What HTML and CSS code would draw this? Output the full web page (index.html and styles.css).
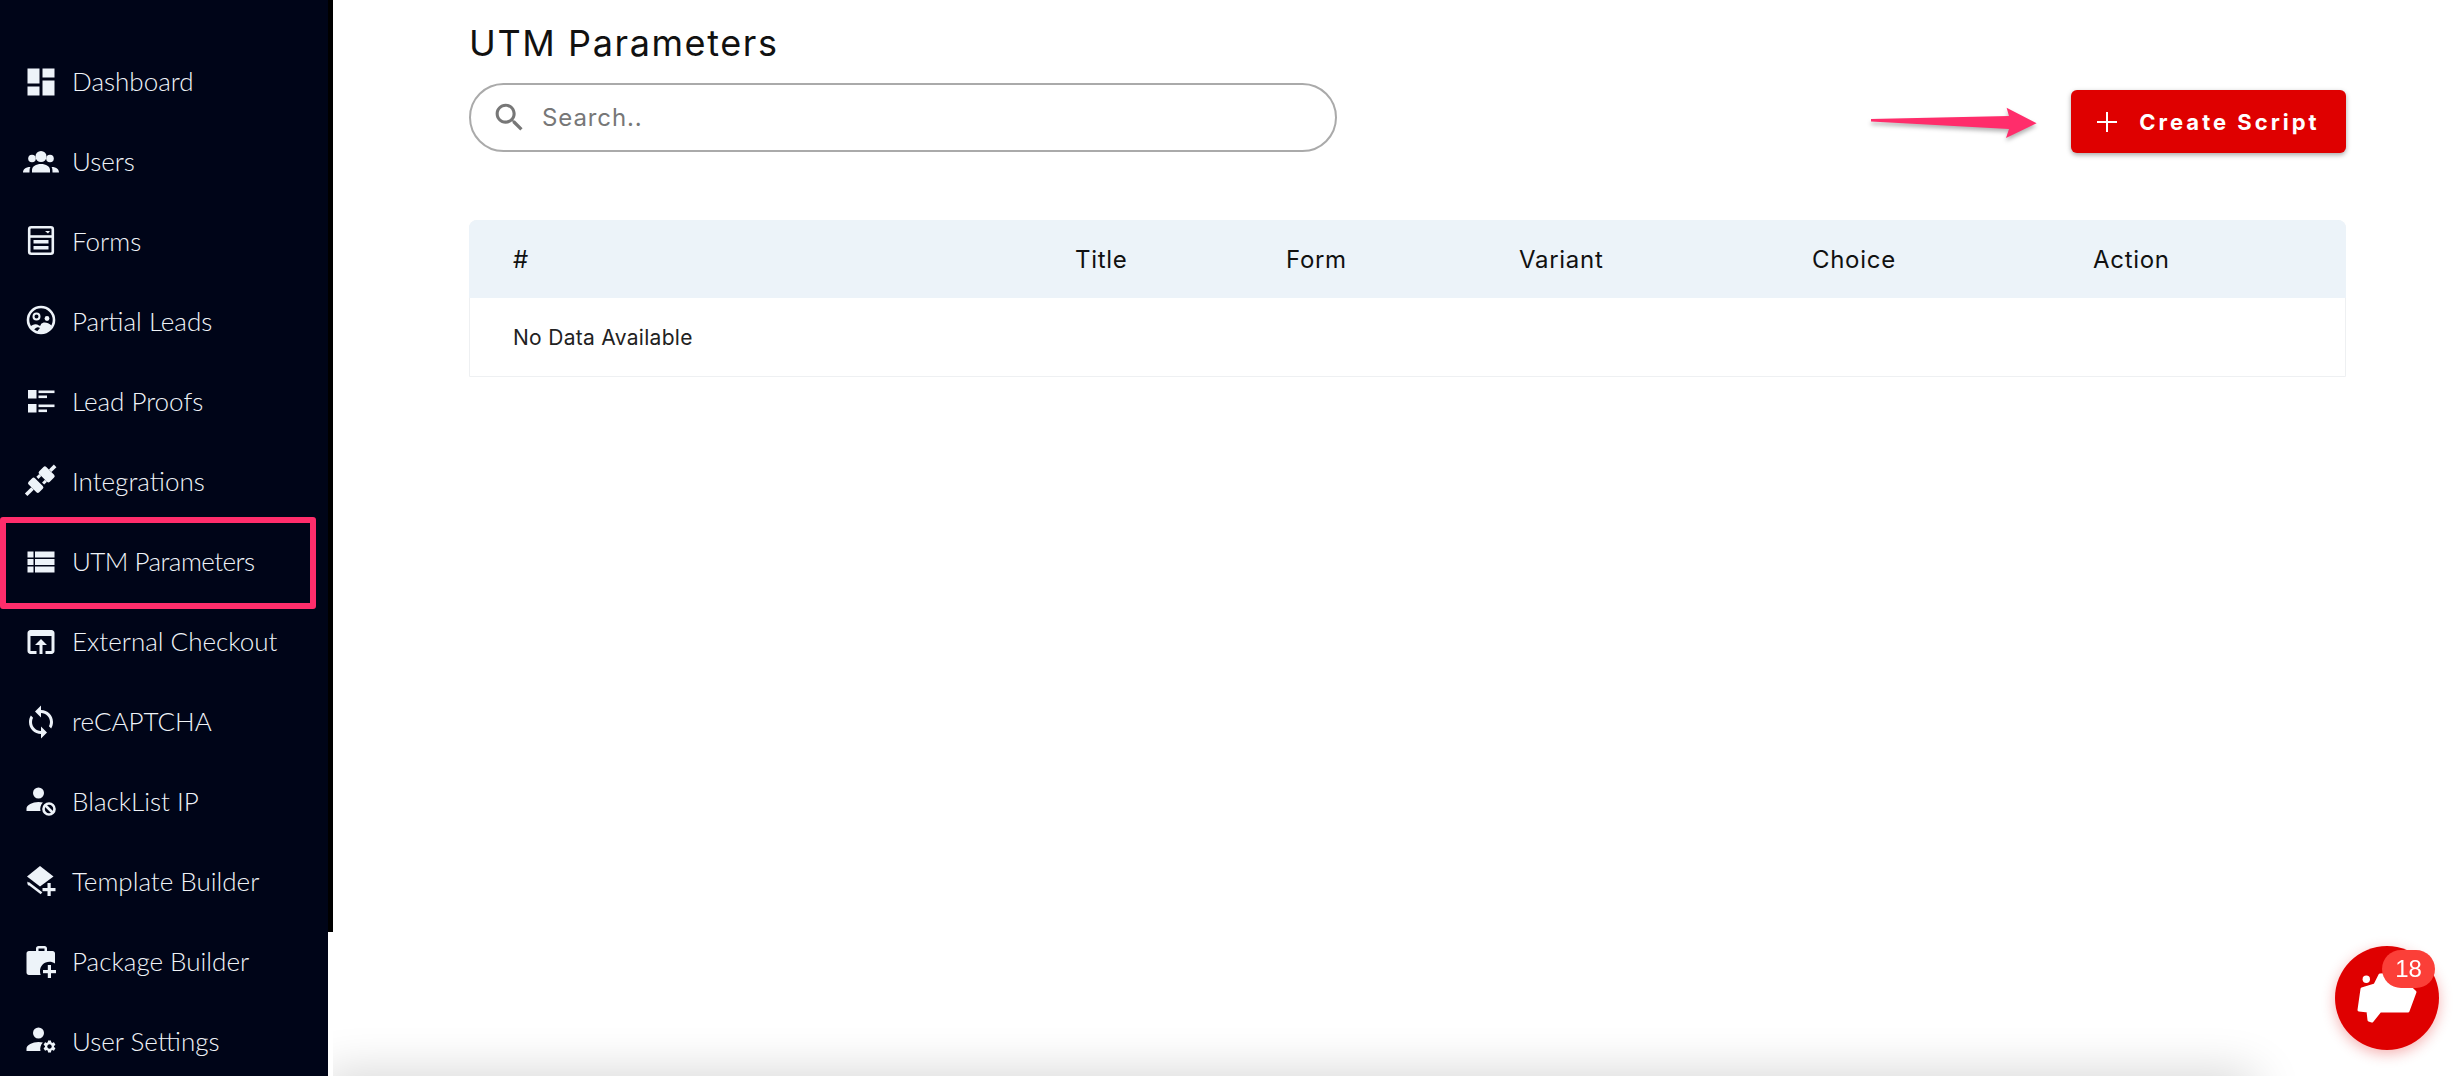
FILE: index.html
```html
<!DOCTYPE html>
<html lang="en">
<head>
<meta charset="utf-8">
<title>UTM Parameters</title>
<link rel="stylesheet" href="styles.css">
</head>
<body>
<div class="app">
  <nav class="sidebar">
    <a class="nav-item"><svg class="nav-icon" viewBox="0 0 24 24"><path d="M3 13h8V3H3v10zm0 8h8v-6H3v6zm10 0h8V11h-8v10zm0-18v6h8V3h-8z"/></svg><span>Dashboard</span></a>
    <a class="nav-item"><svg class="nav-icon" viewBox="0 0 36 36"><circle cx="18" cy="12.500" r="5.500"/><circle cx="9" cy="14.500" r="3.800"/><circle cx="27" cy="14.500" r="3.800"/><path d="M9 28.500V26c0-3.500 4-6 9-6s9 2.500 9 6v2.500z"/><path d="M0 28.500c0-3 2-5.500 7.500-5.500-.8 1-1 2.500-1 5.500z"/><path d="M36 28.500c0-3-2-5.500-7.500-5.500.8 1 1 2.500 1 5.500z"/></svg><span>Users</span></a>
    <a class="nav-item"><svg class="nav-icon" viewBox="0 0 36 36"><rect x="6.200" y="3.200" width="23.600" height="26.600" rx="2" class="line"/><path d="M6 12.500h24" class="line"/><path d="M22 7h5l-2 2.500z"/><rect x="10.500" y="16" width="15" height="3.500"/><rect x="10.500" y="22" width="15" height="3.500"/></svg><span>Forms</span></a>
    <a class="nav-item"><svg class="nav-icon" viewBox="0 0 36 36"><circle cx="18" cy="16" r="13" class="line"/><circle cx="13.500" cy="12.500" r="3" class="line thin"/><circle cx="24" cy="14.500" r="2.400"/><path d="M7 23c3-3 6-3.500 9-1.500 1 1 2-.5 2-1.500 2-2.500 7-2 10.500 1.500C27 26 23 29 18 29c-2 0-3-.5-4-1.500l3-3.500c-2-1.500-4-1-6 2-1.500-.5-3-2-4-3z"/></svg><span>Partial Leads</span></a>
    <a class="nav-item"><svg class="nav-icon" viewBox="0 0 36 36"><rect x="5" y="6" width="8.500" height="8.500"/><rect x="5" y="20" width="8.500" height="8.500"/><rect x="15.500" y="6.500" width="16" height="2.600"/><rect x="15.500" y="11.500" width="8.500" height="2.600"/><rect x="15.500" y="20.500" width="16" height="2.600"/><rect x="15.500" y="25.500" width="8.500" height="2.600"/></svg><span>Lead Proofs</span></a>
    <a class="nav-item"><svg class="nav-icon" viewBox="0 0 36 36"><g transform="rotate(-45 18 16)"><rect x="21" y="8.500" width="10" height="15" rx="2"/><rect x="31" y="14.200" width="7" height="3.600"/><rect x="17" y="10.500" width="4" height="3"/><rect x="17" y="18.500" width="4" height="3"/><rect x="6" y="8.500" width="9" height="15" rx="2"/><rect x="-3" y="14.200" width="9" height="3.600"/></g></svg><span>Integrations</span></a>
    <a class="nav-item is-marked"><svg class="nav-icon" viewBox="0 0 24 24"><path d="M3 14h4v-4H3v4zm0 5h4v-4H3v4zM3 9h4V5H3v4zm5 5h13v-4H8v4zm0 5h13v-4H8v4zM8 5v4h13V5H8z"/></svg><span>UTM Parameters</span></a>
    <a class="nav-item"><svg class="nav-icon" viewBox="0 0 24 24"><path d="M19 4H5c-1.110 0-2 .9-2 2v12c0 1.100.89 2 2 2h4v-2H5V8h14v10h-4v2h4c1.100 0 2-.9 2-2V6c0-1.100-.89-2-2-2zm-7 6l-4 4h3v6h2v-6h3l-4-4z"/></svg><span>External Checkout</span></a>
    <a class="nav-item"><svg class="nav-icon" viewBox="0 0 24 24"><path d="M12 4V1L8 5l4 4V6c3.310 0 6 2.690 6 6 0 1.010-.25 1.970-.7 2.800l1.460 1.460C19.540 15.030 20 13.570 20 12c0-4.420-3.580-8-8-8zm0 14c-3.310 0-6-2.690-6-6 0-1.010.25-1.970.7-2.800L5.240 7.740C4.460 8.970 4 10.430 4 12c0 4.420 3.580 8 8 8v3l4-4-4-4v3z"/></svg><span>reCAPTCHA</span></a>
    <a class="nav-item"><svg class="nav-icon" viewBox="0 0 36 36"><circle cx="15.500" cy="9" r="5.500"/><path d="M3.500 27v-2.500c0-3.500 6-6.500 12-6.500 1.500 0 3 .2 4.400.5-2.200 2-3.200 5.500-2.400 8.500z"/><circle cx="26" cy="25" r="5.500" class="line"/><path d="M22.500 21.500l7 7" class="line"/></svg><span>BlackList IP</span></a>
    <a class="nav-item"><svg class="nav-icon" viewBox="0 0 36 36"><path d="M17 2l13.500 10.500L17 22.500 4 12.500z"/><path d="M5 19l13.500 10.300" class="line"/><path d="M4 17.500l3 2.300-1.500 2z"/><rect x="24.500" y="19" width="3.200" height="13"/><rect x="19.500" y="24" width="13" height="3.200"/></svg><span>Template Builder</span></a>
    <a class="nav-item"><svg class="nav-icon" viewBox="0 0 36 36"><path d="M13 7V4.500C13 3.100 14 2 15.500 2h6C23 2 24 3.100 24 4.500V7h5.500c1.500 0 2.500 1.100 2.500 2.500V19.500c-1.800-1.200-3.500-1.700-5.500-1.700-5.500 0-9.500 4.200-9.500 9.500 0 1.300.2 2.500.7 3.700H6c-1.500 0-2.500-1.100-2.500-2.500V9.500C3.500 8.100 4.500 7 6 7zm2.500 0h6V4.500h-6z" fill-rule="evenodd"/><rect x="24.800" y="21" width="3.200" height="13"/><rect x="20" y="26" width="13" height="3.200"/></svg><span>Package Builder</span></a>
    <a class="nav-item"><svg class="nav-icon" viewBox="0 0 36 36"><circle cx="15.500" cy="9" r="5.500"/><path d="M3.500 27v-2.500c0-3.500 6-6.500 12-6.500 1.500 0 3 .2 4.400.5-2.200 2-3.200 5.500-2.400 8.500z"/><svg x="19" y="15" width="15" height="15" viewBox="0 0 24 24"><path d="M19.140 12.940c.04-.3.06-.61.06-.94 0-.32-.02-.64-.07-.94l2.030-1.580c.18-.14.23-.41.12-.61l-1.920-3.320c-.12-.22-.37-.29-.59-.22l-2.390.96c-.5-.38-1.030-.7-1.620-.94l-.36-2.540c-.04-.24-.24-.41-.48-.41h-3.840c-.24 0-.43.17-.47.41l-.36 2.540c-.59.24-1.130.57-1.620.94l-2.390-.96c-.22-.08-.47 0-.59.22L2.740 8.870c-.12.21-.08.47.12.61l2.030 1.580c-.05.3-.09.63-.09.94s.02.64.07.94l-2.030 1.580c-.18.14-.23.41-.12.61l1.920 3.320c.12.22.37.29.59.22l2.390-.96c.5.38 1.030.7 1.620.94l.36 2.540c.05.24.24.41.48.41h3.840c.24 0 .44-.17.47-.41l.36-2.540c.59-.24 1.130-.56 1.620-.94l2.390.96c.22.08.47 0 .59-.22l1.920-3.320c.12-.22.07-.47-.12-.61l-2.010-1.580zM12 15.600c-1.980 0-3.600-1.620-3.600-3.600s1.620-3.600 3.600-3.600 3.600 1.620 3.600 3.600-1.620 3.600-3.600 3.600z"/></svg></svg><span>User Settings</span></a>
  </nav>
  <div class="scroll-strip"></div>
  <main class="main">
    <h1 class="title">UTM Parameters</h1>
    <div class="toolbar">
      <div class="search">
        <svg class="search-icon" viewBox="0 0 24 24"><path d="M15.500 14h-.79l-.28-.27C15.410 12.590 16 11.110 16 9.500 16 5.910 13.090 3 9.500 3S3 5.910 3 9.500 5.910 16 9.500 16c1.610 0 3.090-.59 4.230-1.570l.27.28v.79l5 4.990L20.490 19l-4.990-5zm-6 0C7.010 14 5 11.990 5 9.500S7.010 5 9.500 5 14 7.010 14 9.500 11.990 14 9.500 14z"/></svg>
        <span class="search-text">Search..</span>
      </div>
      <div class="actions">
        <svg class="arrow" width="168" height="44" viewBox="0 0 168 44"><path class="arrow-shape" d="M1 19l138-3-2.400-8.300 30 15.600-30.600 14.700 3-9L1 21.500z"/></svg>
        <button class="create-btn"><svg class="plus" viewBox="0 0 20 20"><path d="M9 0h2v9h9v2h-9v9H9v-9H0V9h9z"/></svg><span>Create Script</span></button>
      </div>
    </div>
    <section class="table">
      <div class="table-row table-head">
        <div class="cell cell-first">#</div>
        <div class="cell">Title</div>
        <div class="cell">Form</div>
        <div class="cell">Variant</div>
        <div class="cell">Choice</div>
        <div class="cell">Action</div>
      </div>
      <div class="table-empty">No Data Available</div>
    </section>
    <div class="page-shadow"></div>
  </main>
</div>
<div class="chat">
  <svg class="chat-icon" viewBox="0 0 104 104"><circle cx="31.300" cy="33.300" r="3.700"/><path class="chat-shape" d="M27 43l13-4 5-10 16-1 19 18-7 19H45l-8 10-3-1-1-9-9-1z"/></svg>
  <span class="chat-badge">18</span>
</div>
</body>
</html>
```
FILE: styles.css
```css
*, *::before, *::after { box-sizing: border-box; }
html, body { margin: 0; height: 100%; overflow: hidden; background: #fff; }
body { font-family: "Inter", "Liberation Sans", sans-serif; color: #111; }

.app { display: flex; height: 1076px; }

.sidebar {
  width: 328px;
  flex: none;
  height: 100%;
  overflow: hidden;
  padding-top: 42px;
  background: #000518;
  display: flex;
  flex-direction: column;
  font-family: "Lato", "Liberation Sans", sans-serif;
}
.scroll-strip { width: 5px; height: 932px; flex: none; background: #000; }

.nav-item {
  position: relative;
  flex: none;
  height: 80px;
  display: flex;
  align-items: center;
  gap: 14px;
  padding-left: 23px;
  color: #f0f4f8;
  font-size: 26px;
  font-weight: 300;
}
.nav-item span { padding-bottom: 2px; margin-left: -1px; }
.nav-icon { width: 36px; height: 36px; flex: none; fill: #edf3f9; }
.nav-icon .line { fill: none; stroke: #edf3f9; stroke-width: 2.6; }
.nav-icon .thin { stroke-width: 2; }
.is-marked span { letter-spacing: -.55px; }
.is-marked::after {
  content: "";
  position: absolute;
  left: 0;
  top: -5px;
  width: 316px;
  height: 92px;
  border: 6px solid #ff2d6b;
  border-radius: 3px;
}

.main { flex: 1; min-width: 0; display: flex; flex-direction: column; padding: 0 108px 0 136px; position: relative; overflow: hidden; }
.title { margin: 21px 0 0; font-size: 36px; line-height: 44px; font-weight: 400; color: #111; letter-spacing: 1.6px; }
.toolbar { display: flex; justify-content: space-between; margin-top: 18px; }
.search {
  width: 868px;
  height: 69px;
  display: flex;
  align-items: center;
  gap: 14px;
  padding-left: 20px;
  border: 2px solid #aaa;
  border-radius: 35px;
}
.search-icon { width: 37px; height: 37px; fill: #777; flex: none; }
.search-text { color: #777; font-size: 24px; letter-spacing: .9px; }
.actions { display: flex; align-items: flex-start; }
.arrow { flex: none; margin: 17px 33px 0 0; filter: drop-shadow(0 3px 2px rgba(0,0,0,.3)); }
.arrow-shape { fill: #ff2d6b; }
.create-btn {
  width: 275px;
  height: 63px;
  margin-top: 7px;
  display: flex;
  align-items: center;
  justify-content: center;
  gap: 22px;
  border: 0;
  border-radius: 6px;
  background: #df0000;
  color: #fff;
  font: 700 22px "Inter", "Liberation Sans", sans-serif;
  letter-spacing: 3px;
  box-shadow: 0 2px 5px rgba(0,0,0,.35);
}
.plus { width: 20px; height: 20px; fill: #fff; }

.table { margin-top: 67px; border: 1px solid #eef0f2; border-radius: 8px 8px 0 0; }
.table-row { display: grid; grid-template-columns: 589px 211px 233px 292px 281px 271px; }
.table-head { height: 78px; background: #ecf3f9; align-items: center; font-size: 24px; letter-spacing: .7px; border-radius: 8px 8px 0 0; margin: -1px -1px 0; }
.cell { padding-left: 18px; }
.cell:nth-child(2), .cell:nth-child(3), .cell:nth-child(4) { padding-left: 17px; }
.cell-first { padding-left: 44px; }
.table-empty { height: 78px; display: flex; align-items: center; padding-left: 43px; font-size: 21px; letter-spacing: .3px; color: #222; }

.page-shadow {
  position: absolute;
  left: 0;
  right: 210px;
  top: 1086px;
  height: 20px;
  box-shadow: 0 0 50px 10px rgba(0,0,0,.2);
}

.chat {
  position: fixed;
  left: 2335px;
  top: 946px;
  width: 104px;
  height: 104px;
  border-radius: 50%;
  background: #df0000;
  box-shadow: 0 4px 14px rgba(223,0,0,.3);
}
.chat-icon { position: absolute; left: 0; top: 0; width: 104px; height: 104px; fill: #fff; }
.chat-shape { stroke: #fff; stroke-width: 3; stroke-linejoin: round; }
.chat-badge {
  position: absolute;
  left: 47px;
  top: 4px;
  width: 53px;
  height: 38px;
  border-radius: 19px;
  background: #fb3f38;
  color: #fff;
  font: 400 24px/38px "Liberation Sans", sans-serif;
  text-align: center;
}
```
